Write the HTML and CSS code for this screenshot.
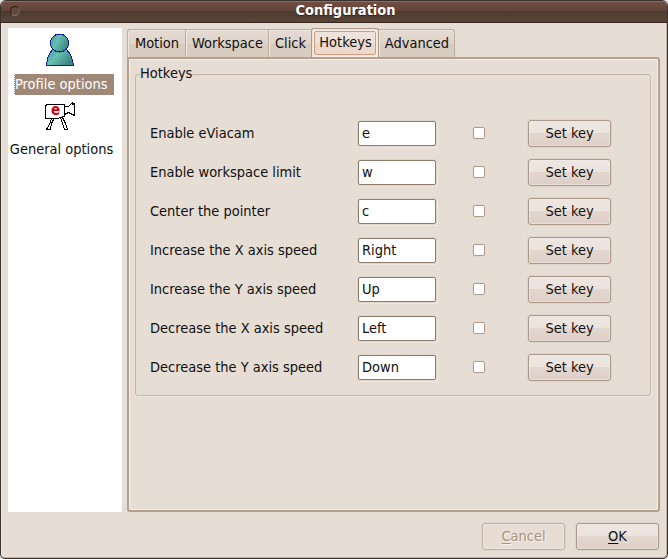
FILE: index.html
```html
<!DOCTYPE html>
<html lang="en">
<head>
<meta charset="utf-8">
<title>Configuration</title>
<link rel="stylesheet" href="styles.css">
</head>
<body>
<div class="window">
  <header class="titlebar"><span class="close"></span><h1>Configuration</h1></header>
  <main class="body">
    <nav class="sidebar">
      <div class="page selected">
        <svg width="32" height="34" viewBox="0 0 32 34" shape-rendering="crispEdges">
          <defs><linearGradient id="teal" x1="0" y1="0" x2="1" y2=".5"><stop offset="0" stop-color="#3f9292"/><stop offset=".45" stop-color="#66c0b4"/><stop offset="1" stop-color="#3c8780"/></linearGradient></defs>
          <path d="M8.500 16.500L5.500 20.500L3.500 25.500L2.500 32.500H29.500L28.500 27.500L26.500 21.500L22.500 16.500Z" fill="url(#teal)" stroke="#0c1c9c"/>
          <circle cx="15.500" cy="10" r="9" fill="url(#teal)" stroke="#0c1c9c"/>
        </svg>
        <span>Profile options</span>
      </div>
      <div class="page general">
        <svg width="32" height="32" viewBox="0 0 32 32" shape-rendering="crispEdges">
          <g fill="#fff" stroke="#000">
            <path d="M7.500 17.500L6.500 22.500L2.500 29.500H6.500L7.500 23.500L10.500 17.500M16.500 17.500L18.500 23.500L20.500 29.500H23.500L21.500 23.500L18.500 17.500"/>
            <path d="M1.500 5.500L3.500 4.500H20.500V16.500L15.500 17.500L14.500 18.500L1.500 18.500Z"/>
            <path d="M20.500 6.500L24.500 6.500L28.500 2.500V4.500L30.500 3.500V15.500L24.500 12.500L20.500 14.500Z"/>
          </g>
          <text x="7" y="15" class="logo-letter">e</text>
        </svg>
        <span>General options</span>
      </div>
    </nav>
    <section class="notebook">
      <div class="tabs">
        <div class="tab motion">Motion</div><div class="tab workspace">Workspace</div><div class="tab click">Click</div><div class="tab active"><span>Hotkeys</span></div><div class="tab advanced">Advanced</div>
      </div>
      <div class="panel">
        <fieldset>
          <legend>Hotkeys</legend>
          <div class="row"><span>Enable eViacam</span><div class="entry">e</div><i class="check"></i><button>Set key</button></div>
          <div class="row"><span>Enable workspace limit</span><div class="entry">w</div><i class="check"></i><button>Set key</button></div>
          <div class="row"><span>Center the pointer</span><div class="entry">c</div><i class="check"></i><button>Set key</button></div>
          <div class="row"><span>Increase the X axis speed</span><div class="entry">Right</div><i class="check"></i><button>Set key</button></div>
          <div class="row"><span>Increase the Y axis speed</span><div class="entry">Up</div><i class="check"></i><button>Set key</button></div>
          <div class="row"><span>Decrease the X axis speed</span><div class="entry">Left</div><i class="check"></i><button>Set key</button></div>
          <div class="row"><span>Decrease the Y axis speed</span><div class="entry">Down</div><i class="check"></i><button>Set key</button></div>
        </fieldset>
      </div>
    </section>
  </main>
  <footer class="actions"><button disabled><u>C</u>ancel</button><button><u>O</u>K</button></footer>
</div>
</body>
</html>
```
FILE: styles.css
```css
* { box-sizing: border-box; }
body { margin: 0; background: #ddd; overflow: hidden; }
body, button { font: 14.47px/18px "DejaVu Sans Condensed", "DejaVu Sans", sans-serif; font-stretch: condensed; color: #101010; }
.window { width: 668px; height: 559px; display: flex; flex-direction: column; background: #e6ddd4; border: 1px solid #3a302c; border-radius: 6px 6px 5px 5px; box-shadow: inset -1px -1px #c3b4aa, inset 1px 0 #f1ebe5; overflow: hidden; }
.titlebar { height: 22px; display: flex; align-items: center; background: linear-gradient(#8d6a5e 0 1px, #72503f00 1px), linear-gradient(#744f45, #614439 45%, #4d3a30 50%, #5b4539); border-bottom: 1px solid #35241e; color: #fff; flex: none; }
.close { width: 10px; height: 10px; border: 1px solid #2a1c17; border-bottom-color: #94796d; border-right-color: #745b50; border-radius: 50%; background: #604a40; margin: -1px 0 0 9px; }
h1 { font-size: 14.47px; line-height: 18px; margin: -3px 0 0 4px; flex: 1; text-align: center; text-shadow: 0 1px 1px #30201a; }
.body { display: grid; grid-template-columns: 114px 533px; column-gap: 5px; padding: 5px 0 0 7px; height: 489px; }
.sidebar { background: #fff; height: 484px; padding-top: 5px; }
.page { display: flex; flex-direction: column; align-items: center; white-space: nowrap; }
.page svg { display: block; margin-right: 10px; }
.selected span { width: 100px; height: 21px; line-height: 20px; margin: 7px 2px 0 0; background: #9f8877; color: #fff; border-left: 1px dotted #fff; }
.general { padding-top: 5px; }
.general span { margin: 8px 7px 0 0; line-height: 18px; }
.logo-letter { font: bold 15px "DejaVu Sans Condensed", sans-serif; fill: #d00010; }
.tabs { display: flex; height: 29px; align-items: flex-end; position: relative; }
.tab { height: 28px; border: 1px solid #bdad9f; border-right: 0; border-bottom: 0; background: linear-gradient(#e4dbd2, #dfd4ca 50%, #d8ccc0 51%, #d9cdc1); box-shadow: inset 1px 1px #eee7e0; padding-top: 4px; text-align: center; white-space: nowrap; }
.motion { width: 58px; padding-left: 1px; border-radius: 3px 0 0; }
.workspace { width: 83px; padding-left: 1px; }
.click { width: 43px; padding-left: 1px; }
.active { width: 68px; height: 29px; padding: 2px; margin-right: -1px; border: 1px solid #ad9989; border-radius: 3px 3px 0 0; border-bottom: 0; background: #f1ebe4; z-index: 1; }
.active span { display: block; height: 24px; line-height: 19px; padding: 1px 0 0 1px; border: 1px solid #d69c82; border-radius: 2px; background: linear-gradient(#eee4dc, #eee2da 50%, #e9d9ce 51%, #ecd9cd); }
.advanced { width: 77px; padding-left: 1px; border-right: 1px solid #bdad9f; border-radius: 0 3px 0 0; }
.panel { height: 455px; border: 2px solid #b3a08e; border-radius: 0 3px 3px; box-shadow: inset 0 0 0 1px #f3ede5; padding: 5px 7px 0 6px; }
fieldset { margin: 0; padding: 30px 0 0 14px; border: 1px solid #c5b6a8; border-radius: 3px; box-shadow: 1px 1px #f0e9e2; height: 332px; min-width: 0; width: 516px; }
legend { padding: 0; margin-left: -10px; height: 20px; line-height: 18px; }
.row { height: 39px; display: grid; grid-template-columns: 208px 78px 92px 83px; align-items: center; }
.row span { padding-bottom: 2px; }
.entry { height: 25px; border: 1px solid #8f7b6b; border-radius: 2px; background: #fff; box-shadow: 0 0 0 1px #dfd5cb, 1px 1px 0 1px #eee7df; line-height: 22px; padding-left: 3px; }
.check { width: 12px; height: 12px; margin: 0 0 2px 37px; border: 1px solid #b39c8b; border-radius: 2px; background: #fff; box-shadow: 0 0 0 1px #e2d8cf; }
button { width: 83px; height: 27px; padding: 0 0 2px; border: 1px solid #aa988b; border-radius: 3px; background: linear-gradient(#eee6e1, #ebe3dc 48%, #e2d7cf 50%, #decfc7); box-shadow: inset 0 0 0 1px #f3ece680, 0 0 0 1px #ded4ca; }
.row button { padding-bottom: 1px; }
.actions { display: flex; justify-content: flex-end; gap: 11px; padding: 11px 8px 0 0; }
.actions button:disabled { color: #a9927f; border-color: #c4b4a8; background: #e7ddd5; text-shadow: 1px 1px #f8f2ed; }
u { text-underline-offset: 2px; }
```
